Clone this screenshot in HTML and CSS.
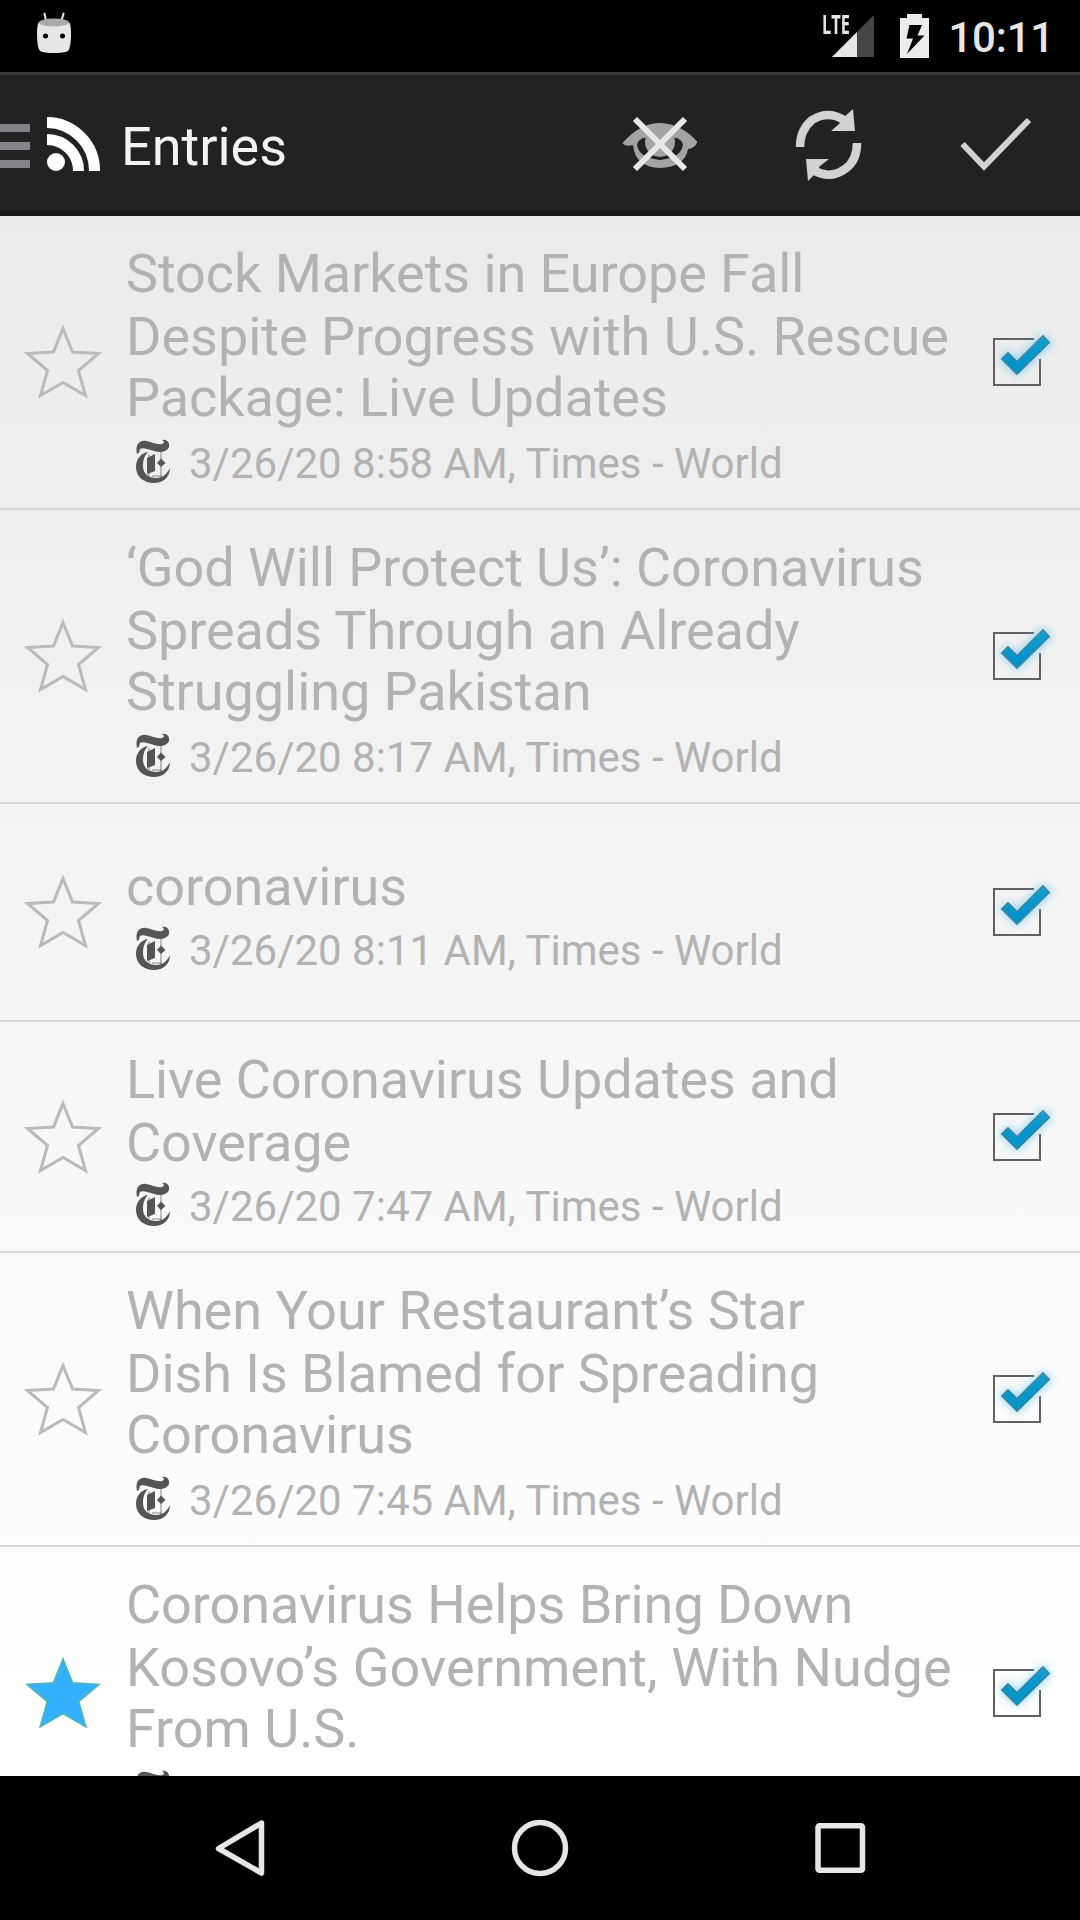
FILE: index.html
```html
<!DOCTYPE html>
<html lang="en">
<head>
<meta charset="utf-8">
<title>Entries</title>
<link rel="stylesheet" href="styles.css">
</head>
<body>
<svg class="defs" width="0" height="0" aria-hidden="true">
  <defs>
    <linearGradient id="tick-fill" x1="0" y1="0" x2="0" y2="1">
      <stop offset="0" stop-color="#1c9fd0"/>
      <stop offset=".4" stop-color="#0797cc"/>
      <stop offset="1" stop-color="#0592c8"/>
    </linearGradient>
    <filter id="glow" x="-50%" y="-50%" width="200%" height="200%">
      <feGaussianBlur stdDeviation="4.5"/>
    </filter>
    <symbol id="star" viewBox="0 0 80 80">
      <path d="M40 6.500L49.500 30L75.500 31.500L55.500 48.500L62.500 73.500L40 60.500L17.500 73.500L24.500 48.500L4.500 31.500L30.500 30Z"/>
    </symbol>
    <symbol id="check" viewBox="0 0 96 96">
      <path d="M55 28H16V74H62V49" fill="none" stroke="#606060" stroke-width="2" stroke-linecap="square"/>
      <path d="M24 48L30 42L39 50L65 25L72 32L39 63Z" fill="#5cc4ee" stroke="#5cc4ee" stroke-width="4" opacity=".6" filter="url(#glow)"/>
      <path d="M23.500 48L30 41.500L39 50.500L65 24.500L71.500 31.500L39 63.500Z" fill="url(#tick-fill)" stroke="#4c7f93" stroke-width="1.200"/>
    </symbol>
    <symbol id="times" viewBox="0 0 36 46">
      <path d="M2 15C0 6 4 1 11 2C17 3 22 6 27 5C30 4 29 2 27 1C32 0 35 4 34 8C32 13 25 14 19 12C13 10 7 8 5 10C4 12 5 14 2 15Z"/>
      <path d="M13 13C9 17 8 22 8 27C8 35 14 39 21 39C28 39 32 35 35 29C35 38 28 44 19 44C8 44 1 37 1 28C1 20 6 14 13 13Z"/>
      <path d="M12 19L20 15V32L12 35Z"/>
      <path d="M22 24L26 19.500L30.500 24L26 28Z"/>
      <path d="M14 15V37M26 13V40M17 37H27" fill="none" stroke="#555" stroke-width=".7"/>
    </symbol>
  </defs>
</svg>
<div class="screen">
  <header class="status-bar">
    <svg class="debug-icon" width="36" height="42" viewBox="0 0 36 42">
      <path d="M8.500 1.500L10 9M27.500 1.500L25.500 9" stroke="#e6e6e6" stroke-width="2" stroke-linecap="round"/>
      <path d="M3 10Q18 4 33 10Q35 12 35 22Q35 36 32 39Q28 41 18 41Q8 41 4 39Q1 36 1 22Q1 12 3 10Z" fill="#e6e6e6"/>
      <ellipse cx="18" cy="10.500" rx="15" ry="4" fill="#aaa"/>
      <circle cx="9.500" cy="24" r="2.500"/><circle cx="26.500" cy="24" r="2.500"/>
    </svg>
    <div class="signal">
      <span class="lte">LTE</span>
      <svg width="44" height="43" viewBox="0 0 44 43">
        <path d="M43 0V42H1Z" fill="#464646"/><path d="M26 17V42H1Z" fill="#e6e6e6"/>
      </svg>
    </div>
    <svg class="battery" width="29" height="44" viewBox="0 0 29 44">
      <path d="M7 0H22V4H29V44H0V4H7Z" fill="#ececec"/>
      <path d="M9.500 11H22L17.500 21.500H24.500L7 40L13 24.500H6.500Z"/>
    </svg>
    <time class="clock">10:11</time>
  </header>
  <div class="action-bar">
    <svg class="drawer" width="30" height="44" viewBox="0 0 30 44" fill="#838489">
      <path d="M0 0H30V8H0ZM0 18H30V26H0ZM0 36H30V44H0Z"/>
    </svg>
    <svg class="feed" width="54" height="54" viewBox="0 0 54 54">
      <circle cx="9" cy="45" r="9" fill="#fff"/>
      <path d="M0 22.500A31.500 31.500 0 0 1 31.500 54M0 5.500A48 48 0 0 1 47.500 54" fill="none" stroke="#fff" stroke-width="11"/>
    </svg>
    <h1 class="heading">Entries</h1>
    <div class="actions">
      <svg width="84" height="84" viewBox="0 0 84 84">
        <path d="M4.500 39Q22 19 42 19Q64 20 79.500 38Q76 45 70 45Q67 63 42 64Q17 63 15 41Q7 43 4.500 39Z" fill="#a3a3a3"/>
        <path d="M30 33Q19 35 19 41Q21 54 42 56Q63 54 65 41Q65 35 54 33Z" fill="#222"/>
        <circle cx="42" cy="38" r="15" fill="#a3a3a3"/>
        <path d="M17 15L67 65M67 15L17 65" stroke="#e8e8e8" stroke-width="6"/>
      </svg>
      <svg width="84" height="84" viewBox="0 0 84 84">
        <path d="M14 43Q14 26 26 16Q42 6 58 16" fill="none" stroke="#d2d2d2" stroke-width="8.500"/>
        <path d="M67 5L69 27H45L53 20L57 14Z" fill="#d2d2d2"/>
        <path d="M71 39Q71 57 59 65Q44 76 27 66" fill="none" stroke="#d2d2d2" stroke-width="8.500"/>
        <path d="M20 55H43L34 62L30 69L22 77Z" fill="#d2d2d2"/>
      </svg>
      <svg width="84" height="84" viewBox="0 0 84 84">
        <path d="M8.500 40L30 62.500L75 16" fill="none" stroke="#d2d2d2" stroke-width="6"/>
      </svg>
    </div>
  </div>
  <main class="entries">
    <article class="entry">
      <svg class="star"><use href="#star"/></svg>
      <div class="body">
        <h2 class="title"><span>Stock Markets in Europe Fall</span><span class="even">Despite Progress with U.S. Rescue</span><span>Package: Live Updates</span></h2>
        <p class="meta"><svg class="source"><use href="#times"/></svg>3/26/20 8:58 AM, Times - World</p>
      </div>
      <svg class="check"><use href="#check"/></svg>
    </article>
    <article class="entry">
      <svg class="star"><use href="#star"/></svg>
      <div class="body">
        <h2 class="title"><span>‘God Will Protect Us’: Coronavirus</span><span>Spreads Through an Already</span><span>Struggling Pakistan</span></h2>
        <p class="meta"><svg class="source"><use href="#times"/></svg>3/26/20 8:17 AM, Times - World</p>
      </div>
      <svg class="check"><use href="#check"/></svg>
    </article>
    <article class="entry">
      <svg class="star"><use href="#star"/></svg>
      <div class="body">
        <h2 class="title"><span>coronavirus</span></h2>
        <p class="meta"><svg class="source"><use href="#times"/></svg>3/26/20 8:11 AM, Times - World</p>
      </div>
      <svg class="check"><use href="#check"/></svg>
    </article>
    <article class="entry">
      <svg class="star"><use href="#star"/></svg>
      <div class="body">
        <h2 class="title"><span>Live Coronavirus Updates and</span><span>Coverage</span></h2>
        <p class="meta"><svg class="source"><use href="#times"/></svg>3/26/20 7:47 AM, Times - World</p>
      </div>
      <svg class="check"><use href="#check"/></svg>
    </article>
    <article class="entry">
      <svg class="star"><use href="#star"/></svg>
      <div class="body">
        <h2 class="title"><span class="even">When Your Restaurant’s Star</span><span>Dish Is Blamed for Spreading</span><span>Coronavirus</span></h2>
        <p class="meta"><svg class="source"><use href="#times"/></svg>3/26/20 7:45 AM, Times - World</p>
      </div>
      <svg class="check"><use href="#check"/></svg>
    </article>
    <article class="entry">
      <svg class="star starred"><use href="#star"/></svg>
      <div class="body">
        <h2 class="title"><span>Coronavirus Helps Bring Down</span><span class="loose">Kosovo’s Government, With Nudge</span><span>From U.S.</span></h2>
        <p class="meta"><svg class="source"><use href="#times"/></svg></p>
      </div>
      <svg class="check"><use href="#check"/></svg>
    </article>
  </main>
  <nav class="nav-bar">
    <svg width="60" height="60" viewBox="0 0 60 60"><path d="M51.500 5L8.500 30.500L51.500 55Z"/></svg>
    <svg width="60" height="60" viewBox="0 0 60 60"><circle cx="30" cy="30" r="25.500"/></svg>
    <svg width="60" height="60" viewBox="0 0 60 60"><rect x="8" y="7.750" width="44.500" height="44.500" rx="1.500"/></svg>
  </nav>
</div>
</body>
</html>
```

FILE: styles.css
```css
* { box-sizing: border-box; }
body { margin: 0; background: #000; font-family: Roboto, sans-serif; }
svg { display: block; flex: none; }
h1, h2, p { margin: 0; font-weight: 400; }
.defs { position: absolute; }

.screen {
  width: 1080px;
  height: 1920px;
  display: flex;
  flex-direction: column;
  overflow: hidden;
}

.status-bar {
  height: 72px;
  flex: none;
  display: flex;
  align-items: flex-start;
  padding: 12px 26px 0 36px;
  background: #000;
}
.signal {
  display: grid;
  margin: 2px 25px 0 auto;
  width: 53px;
}
.signal > * { grid-area: 1 / 1; }
.signal svg { margin: 1px 0 0 9px; }
.lte {
  font: 700 26px/21px "Open Sans", sans-serif;
  color: #e6e6e6;
  transform: scaleX(.63);
  transform-origin: 0 0;
}
.battery { margin: 2px 19px 0 0; }
.clock {
  font-size: 42px;
  font-weight: 500;
  line-height: 51px;
  letter-spacing: -.2px;
  color: #e6e6e6;
}

.action-bar {
  height: 144px;
  flex: none;
  display: flex;
  align-items: center;
  padding-top: 6px;
  border-top: 3px solid #393939;
  border-bottom: 6px solid #1b1b1b;
  background: #222;
}
.drawer { margin-right: 17px; }
.feed { margin: 0 20px 3px 0; }
.heading {
  padding-top: 2px;
  font-size: 54px;
  line-height: 64px;
  color: #f3f3f3;
}
.actions {
  display: flex;
  gap: 84px;
  margin-left: auto;
  padding-right: 42px;
}

.entries {
  flex: 1;
  min-height: 0;
  overflow: hidden;
  background: linear-gradient(#ebebeb, #fff 96%);
}
.entry {
  display: flex;
  align-items: center;
  min-height: 218px;
  padding: 20px 6px 22px 23px;
  border-bottom: 2px solid #d9d9d9;
}
.star {
  width: 80px;
  height: 80px;
  margin: 2px 23px 0 0;
  fill: none;
  stroke: #bababa;
  stroke-width: 3;
}
.starred { fill: #33b0ff; stroke: #4bb4bf; stroke-width: 2; }
.body { flex: 1; color: #b2b2b2; }
.title {
  padding-top: 6px;
  font-size: 54px;
  line-height: 63px;
  letter-spacing: -.06px;
  white-space: nowrap;
}
.title span { display: block; }
.title span:nth-child(3) { margin: -2px 0 2px; }
.title .even { letter-spacing: -.02px; }
.title .loose { letter-spacing: .1px; }
.meta {
  display: flex;
  align-items: center;
  height: 55px;
  padding: 10px 0 0 9px;
  font-size: 42px;
  line-height: 50px;
}
.source { width: 36px; height: 46px; margin: 0 18px 4px 0; fill: #555; }
.check { width: 96px; height: 96px; margin-bottom: 4px; }

.nav-bar {
  height: 144px;
  flex: none;
  display: flex;
  justify-content: center;
  align-items: center;
  gap: 240px;
  background: #000;
  fill: none;
  stroke: #e6e6e6;
  stroke-width: 5.5;
  stroke-linejoin: round;
}
```
